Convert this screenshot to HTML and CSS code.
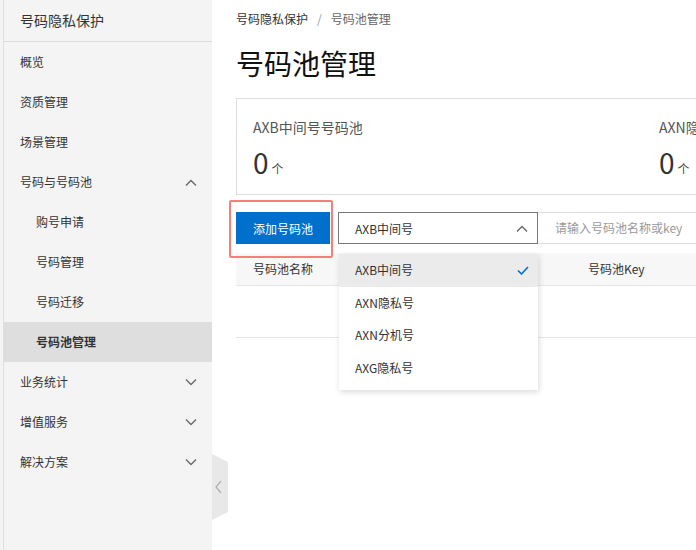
FILE: index.html
```html
<!DOCTYPE html>
<html lang="zh-CN">
<head>
<meta charset="utf-8">
<title>号码池管理</title>
<link rel="stylesheet" href="styles.css">
</head>
<body>
<div class="app">
  <aside class="sidebar">
    <nav class="nav">
      <div class="nav-title">号码隐私保护</div>
      <div class="nav-item">概览</div>
      <div class="nav-item">资质管理</div>
      <div class="nav-item">场景管理</div>
      <div class="nav-item has-sub">号码与号码池
        <svg class="chev" width="12" height="7" viewBox="0 0 12 7"><polyline points="1,6.5 6,1.5 11,6.5" fill="none" stroke="#666" stroke-width="1.3"/></svg>
      </div>
      <div class="nav-item sub">购号申请</div>
      <div class="nav-item sub">号码管理</div>
      <div class="nav-item sub">号码迁移</div>
      <div class="nav-item sub active">号码池管理</div>
      <div class="nav-item has-sub">业务统计
        <svg class="chev" width="12" height="7" viewBox="0 0 12 7"><polyline points="1,0.5 6,5.5 11,0.5" fill="none" stroke="#666" stroke-width="1.3"/></svg>
      </div>
      <div class="nav-item has-sub">增值服务
        <svg class="chev" width="12" height="7" viewBox="0 0 12 7"><polyline points="1,0.5 6,5.5 11,0.5" fill="none" stroke="#666" stroke-width="1.3"/></svg>
      </div>
      <div class="nav-item has-sub">解决方案
        <svg class="chev" width="12" height="7" viewBox="0 0 12 7"><polyline points="1,0.5 6,5.5 11,0.5" fill="none" stroke="#666" stroke-width="1.3"/></svg>
      </div>
    </nav>
    <div class="collapse-tab">
      <svg width="16" height="66" viewBox="0 0 16 66"><polygon points="0,0 16,8 16,58 0,66" fill="#e8e8e8"/><polyline points="9,27 4,33 9,39" fill="none" stroke="#b0b0b0" stroke-width="1.2"/></svg>
    </div>
  </aside>

  <main class="main">
    <div class="breadcrumb"><span class="bc-link">号码隐私保护</span><span class="bc-sep">/</span><span class="bc-cur">号码池管理</span></div>
    <h1 class="page-title">号码池管理</h1>

    <section class="stats">
      <div class="stat">
        <div class="stat-label">AXB中间号号码池</div>
        <div class="stat-value"><span class="num">0</span><span class="unit">个</span></div>
      </div>
      <div class="stat">
        <div class="stat-label">AXN隐私号号码池</div>
        <div class="stat-value"><span class="num">0</span><span class="unit">个</span></div>
      </div>
    </section>

    <div class="toolbar">
      <div class="btn-wrap">
        <button class="btn-primary">添加号码池</button>
        <span class="highlight"></span>
      </div>
      <div class="select">
        <span>AXB中间号</span>
        <svg width="12" height="7" viewBox="0 0 12 7"><polyline points="1,6.5 6,1.5 11,6.5" fill="none" stroke="#666" stroke-width="1.3"/></svg>
        <ul class="dropdown">
          <li class="selected">AXB中间号
            <svg width="12" height="9" viewBox="0 0 12 9"><polyline points="1,4.5 4.5,8 11,1" fill="none" stroke="#0070cc" stroke-width="1.6"/></svg>
          </li>
          <li>AXN隐私号</li>
          <li>AXN分机号</li>
          <li>AXG隐私号</li>
        </ul>
      </div>
      <div class="search">请输入号码池名称或key</div>
    </div>

    <div class="table">
      <div class="thead">
        <div class="th col1">号码池名称</div>
        <div class="th col2">号码池Key</div>
      </div>
      <div class="tbody-empty"></div>
    </div>
  </main>
</div>
</body>
</html>
```

FILE: styles.css
```css
* { box-sizing: border-box; }
html, body {
  margin: 0;
  padding: 0;
  width: 696px;
  height: 550px;
  overflow: hidden;
  background: #fff;
  font-family: "Noto Sans CJK SC", "Liberation Sans", sans-serif;
  font-size: 12px;
  color: #333;
}
.app {
  display: flex;
  height: 550px;
}
.sidebar {
  position: relative;
  width: 212px;
  flex: 0 0 212px;
  background: #f4f4f4;
  padding-left: 3px;
}
.nav {
  height: 100%;
  border-left: 1px solid #dedede;
}
.nav-title {
  height: 42px;
  line-height: 41px;
  padding-left: 16px;
  font-size: 14px;
  color: #333;
  border-bottom: 1px solid #dcdcdc;
}
.nav-item {
  height: 40px;
  line-height: 40px;
  padding-left: 16px;
  padding-right: 15px;
  display: flex;
  align-items: center;
  justify-content: space-between;
  color: #333;
}
.nav-item.sub { padding-left: 32px; }
.nav-item.active {
  background: #dedede;
  font-weight: bold;
}
.chev { display: block; }
.collapse-tab {
  position: absolute;
  left: 212px;
  top: 454px;
  width: 16px;
  height: 66px;
}
.collapse-tab svg { display: block; }

.main {
  flex: 0 0 900px;
  padding-left: 24px;
}
.breadcrumb {
  margin-top: 10px;
  height: 18px;
  line-height: 18px;
  display: flex;
  color: #333;
}
.bc-sep { margin: 0 9px; color: #999; }
.bc-cur { color: #666; }
.page-title {
  margin: 15px 0 0;
  height: 40px;
  line-height: 40px;
  font-size: 28px;
  font-weight: normal;
  color: #111;
}
.stats {
  margin-top: 15px;
  display: flex;
  border: 1px solid #dddddd;
  height: 97px;
}
.stat {
  width: 406px;
  padding: 18px 0 0 16px;
}
.stat-label {
  height: 20px;
  line-height: 20px;
  font-size: 14px;
  color: #555;
}
.stat-value {
  margin-top: 10px;
  height: 30px;
  line-height: 30px;
  display: flex;
  align-items: baseline;
}
.num {
  font-size: 28px;
  color: #333;
}
.unit {
  font-size: 12px;
  margin-left: 3px;
  color: #444;
}
.toolbar {
  margin-top: 17px;
  display: flex;
  height: 32px;
}
.btn-wrap {
  position: relative;
  margin-right: 8px;
}
.btn-primary {
  width: 94px;
  height: 32px;
  border: 0;
  background: #0070cc;
  color: #fff;
  font-family: inherit;
  font-size: 12px;
  padding: 0;
  display: block;
}
.highlight {
  position: absolute;
  left: -7px;
  top: -12px;
  width: 104px;
  height: 58px;
  border: 2px solid #f57f7c;
  border-radius: 2px;
}
.select {
  position: relative;
  width: 200px;
  height: 32px;
  border: 1px solid #777;
  display: flex;
  align-items: center;
  justify-content: space-between;
  padding: 0 9px 0 16px;
  color: #333;
}
.select svg { display: block; }
.dropdown {
  position: absolute;
  left: 0;
  top: 41px;
  width: 199px;
  margin: 0;
  padding: 0 0 6px;
  list-style: none;
  background: #fff;
  box-shadow: 1px 2px 6px rgba(0,0,0,0.15);
  z-index: 5;
}
.dropdown li {
  height: 32.5px;
  line-height: 32px;
  padding: 0 9px 0 16px;
  display: flex;
  align-items: center;
  justify-content: space-between;
  color: #333;
}
.dropdown li.selected { background: #ebebeb; }
.dropdown li svg { display: block; }
.search {
  width: 260px;
  height: 32px;
  line-height: 30px;
  border: 1px solid #dddddd;
  border-left: 0;
  padding-left: 17px;
  color: #999;
}
.table {
  margin-top: 9px;
}
.thead {
  display: flex;
  height: 33px;
  background: #f7f7f7;
  border-bottom: 1px solid #e6e6e6;
}
.th {
  line-height: 32px;
  color: #333;
}
.col1 { width: 335px; padding-left: 17px; }
.col2 { padding-left: 17px; }
.tbody-empty {
  height: 52px;
  border-bottom: 1px solid #e6e6e6;
}
```
